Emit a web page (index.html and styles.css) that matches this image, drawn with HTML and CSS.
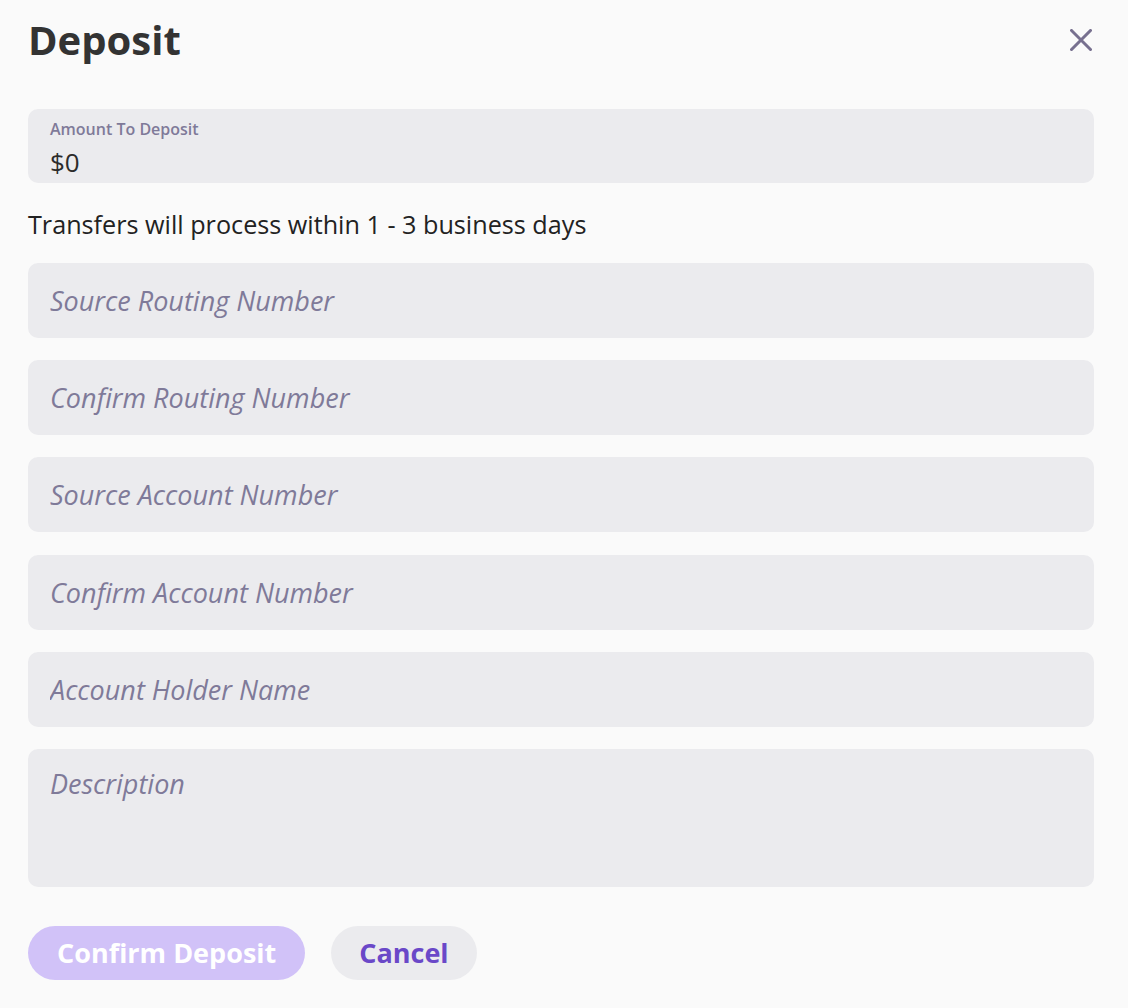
FILE: index.html
```html
<!DOCTYPE html>
<html lang="en">
<head>
<meta charset="utf-8">
<title>Deposit</title>
<link rel="stylesheet" href="styles.css">
</head>
<body>
<div class="modal">
  <header class="modal-header">
    <h1 class="modal-title">Deposit</h1>
    <button class="close-btn" aria-label="Close">
      <svg width="22" height="22" viewBox="0 0 22 22" aria-hidden="true">
        <path d="M1.5 1.5 L20.5 20.5 M20.5 1.5 L1.5 20.5" stroke="#77708f" stroke-width="3" stroke-linecap="square" fill="none"/>
      </svg>
    </button>
  </header>

  <div class="amount-field">
    <label class="amount-label" for="amount">Amount To Deposit</label>
    <input id="amount" class="amount-input" type="text" value="$0">
  </div>

  <p class="note">Transfers will process within 1 - 3 business days</p>

  <div class="fields">
    <input class="field" type="text" placeholder="Source Routing Number">
    <input class="field" type="text" placeholder="Confirm Routing Number">
    <input class="field" type="text" placeholder="Source Account Number">
    <input class="field" type="text" placeholder="Confirm Account Number">
    <input class="field" type="text" placeholder="Account Holder Name">
    <textarea class="field field-area" placeholder="Description"></textarea>
  </div>

  <div class="actions">
    <button class="btn btn-primary">Confirm Deposit</button>
    <button class="btn btn-secondary">Cancel</button>
  </div>
</div>
</body>
</html>
```

FILE: styles.css
```css
* { box-sizing: border-box; }

html, body {
  margin: 0;
  background: #fafafa;
}

body {
  font-family: "Open Sans", "Liberation Sans", sans-serif;
  color: #222;
}

.modal {
  padding: 16px 34px 0 28px;
}

.modal-header {
  display: flex;
  justify-content: space-between;
  align-items: flex-start;
  height: 48px;
}

.modal-title {
  margin: 0;
  font-size: 40px;
  line-height: 48px;
  font-weight: 700;
  color: #333333;
}

.close-btn {
  background: none;
  border: 0;
  padding: 0;
  margin: 13px 2px 0 0;
  width: 22px;
  height: 22px;
  cursor: pointer;
  display: flex;
}

.amount-field {
  margin-top: 45px;
  height: 74px;
  background: #ebebee;
  border-radius: 10px;
  padding: 10px 22px 0 22px;
  display: flex;
  flex-direction: column;
}

.amount-label {
  font-size: 16px;
  line-height: 20px;
  font-weight: 600;
  color: #7f7a99;
}

.amount-input {
  margin: 7px 0 0 0;
  border: 0;
  background: transparent;
  padding: 0;
  font-family: inherit;
  font-size: 26px;
  line-height: 32px;
  height: 32px;
  color: #2b2b2b;
  outline: none;
}

.note {
  margin: 20px 0 0 0;
  font-size: 25.2px;
  line-height: 42px;
  color: #222;
}

.fields {
  margin-top: 18px;
  display: flex;
  flex-direction: column;
  gap: 22.2px;
}

.field {
  display: block;
  width: 100%;
  height: 75px;
  border: 0;
  border-radius: 10px;
  background: #ebebee;
  padding: 0 22px;
  font-family: inherit;
  font-size: 27px;
  color: #222;
  outline: none;
}

.field::placeholder {
  color: #7f7a99;
  font-style: italic;
  opacity: 1;
}

.field-area {
  height: 138px;
  padding: 16px 22px;
  line-height: 38px;
  resize: none;
}

.actions {
  margin-top: 39px;
  display: flex;
  gap: 26px;
}

.btn {
  height: 54px;
  border: 0;
  border-radius: 27px;
  padding: 0 29px;
  font-family: inherit;
  font-size: 27px;
  font-weight: 700;
  cursor: pointer;
}

.btn-primary {
  background: #d1c2f8;
  color: #ffffff;
}

.btn-secondary {
  background: #ebebee;
  color: #6a48c8;
  padding: 0 28px;
}
```
